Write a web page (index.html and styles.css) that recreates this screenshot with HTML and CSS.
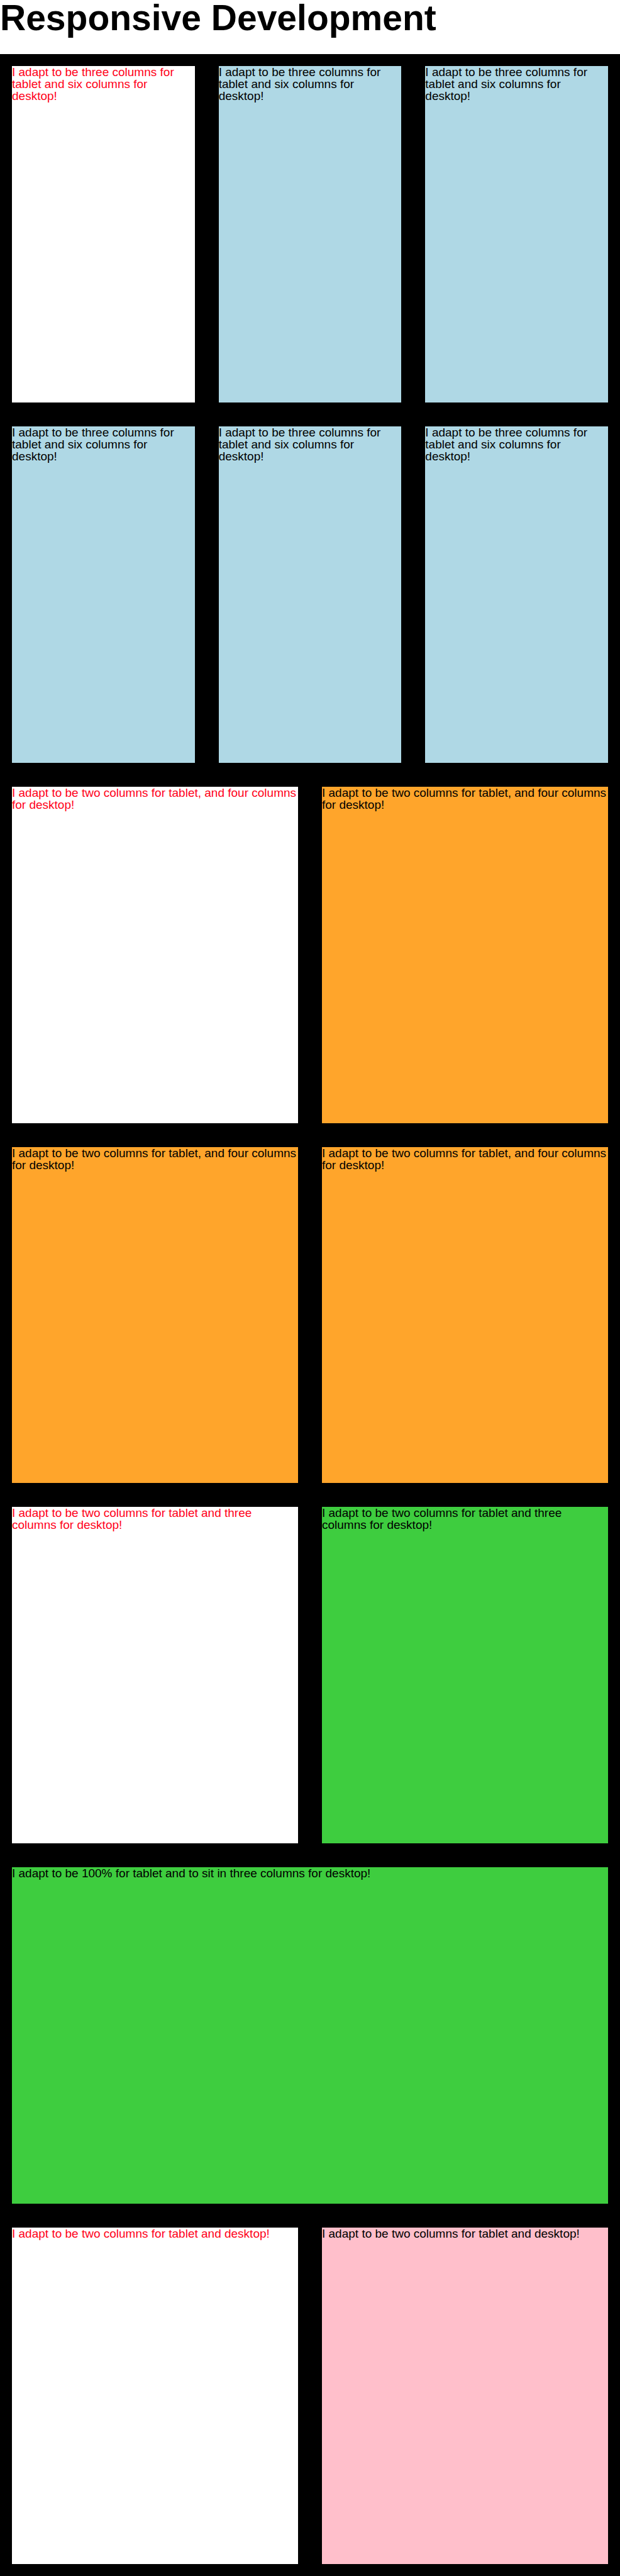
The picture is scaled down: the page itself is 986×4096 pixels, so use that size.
FILE: index.html
```html
<!DOCTYPE html>
<html lang="en">
<head>
<meta charset="utf-8">
<title>Responsive Development</title>
<meta name="viewport" content="width=device-width, initial-scale=1">
<link rel="stylesheet" href="styles.css">
</head>
<body>
<h1 class="title">Responsive Development</h1>
<main class="grid">
  <section class="box third first">I adapt to be three columns for tablet and six columns for desktop!</section>
  <section class="box third blue">I adapt to be three columns for tablet and six columns for desktop!</section>
  <section class="box third blue">I adapt to be three columns for tablet and six columns for desktop!</section>
  <section class="box third blue">I adapt to be three columns for tablet and six columns for desktop!</section>
  <section class="box third blue">I adapt to be three columns for tablet and six columns for desktop!</section>
  <section class="box third blue">I adapt to be three columns for tablet and six columns for desktop!</section>
  <section class="box half first">I adapt to be two columns for tablet, and four columns for desktop!</section>
  <section class="box half orange">I adapt to be two columns for tablet, and four columns for desktop!</section>
  <section class="box half orange">I adapt to be two columns for tablet, and four columns for desktop!</section>
  <section class="box half orange">I adapt to be two columns for tablet, and four columns for desktop!</section>
  <section class="box half first">I adapt to be two columns for tablet and three columns for desktop!</section>
  <section class="box half green">I adapt to be two columns for tablet and three columns for desktop!</section>
  <section class="box full green">I adapt to be 100% for tablet and to sit in three columns for desktop!</section>
  <section class="box half first">I adapt to be two columns for tablet and desktop!</section>
  <section class="box half pink">I adapt to be two columns for tablet and desktop!</section>
</main>
</body>
</html>
```

FILE: styles.css
```css
* {
  box-sizing: border-box;
}

body {
  display: flex;
  flex-direction: column;
  min-height: 100vh;
  margin: 0;
  background: #fff;
  color: #000;
  font-family: "Liberation Sans", Arial, Helvetica, sans-serif;
  font-size: 19px;
  line-height: 19px;
}

.title {
  margin: 0 0 29px;
  font-size: 57px;
  line-height: 57px;
  font-weight: bold;
}

.grid {
  flex: 1;
  display: grid;
  grid-template-columns: repeat(6, minmax(0, 1fr));
  grid-auto-rows: minmax(380px, 1fr);
  gap: 38px;
  padding: 19px;
  background: #000;
}

.third {
  grid-column: span 2;
}

.half {
  grid-column: span 3;
}

.full {
  grid-column: 1 / -1;
}

.first {
  background: #fff;
  color: #ff0019;
}

.blue {
  background: #afd8e5;
}

.orange {
  background: #ffa52b;
}

.green {
  background: #3ecd3f;
}

.pink {
  background: #ffbfcb;
}
```
